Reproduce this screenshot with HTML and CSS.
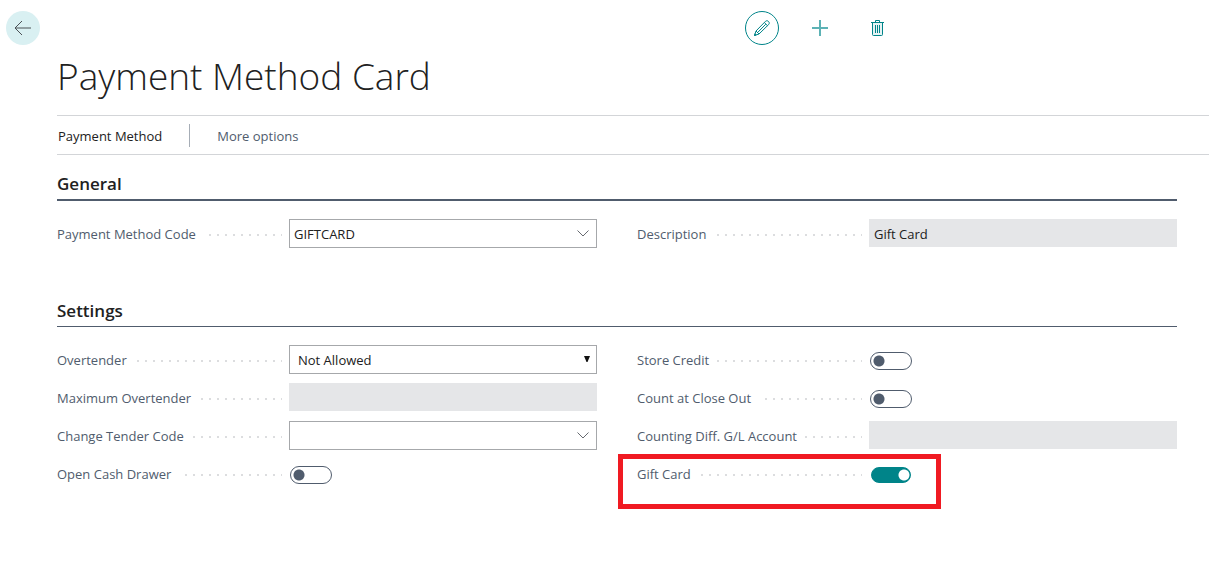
FILE: index.html
```html
<!DOCTYPE html>
<html lang="en">
<head>
<meta charset="utf-8">
<meta name="viewport" content="width=device-width, initial-scale=1">
<title>Payment Method Card</title>
<link rel="stylesheet" href="styles.css">
</head>
<body>
<header class="topbar">
  <button class="icon-btn back" type="button" aria-label="Back">
    <svg width="18" height="16" viewBox="0 0 18 16" fill="none" stroke="#4a5055"><path d="M1 8H17M8 1L1 8L8 15"/></svg>
  </button>
  <div class="tools">
    <button class="icon-btn edit" type="button" aria-label="Edit">
      <svg width="18" height="18" viewBox="0 0 18 18" fill="none" stroke="#008489"><path d="M1.5 16.5L3 12L12.5 2.3C14.5 0.5 17.5 3.5 15.7 5.5L6 15ZM3 12L6 15M11.3 3.5L14.5 6.7M4.8 13.3L12.8 5.2M1.5 16.5L2 14.8L3.2 16Z"/></svg>
    </button>
    <button class="icon-btn" type="button" aria-label="New">
      <svg width="18" height="18" viewBox="0 0 18 18" fill="none" stroke="#5cb2b5" stroke-width="2"><path d="M9 1V17M1 9H17"/></svg>
    </button>
    <button class="icon-btn" type="button" aria-label="Delete">
      <svg width="15" height="18" viewBox="0 0 15 18" fill="none" stroke="#008489"><path fill="#e5f3f4" d="M2.5 3.5V15.5Q2.5 16.5 3.5 16.5H11.5Q12.5 16.5 12.5 15.5V3.5"/><path d="M1 3.5H14M5.5 3V1.5H9.5V3M5.5 6V14M7.5 6V14M9.5 6V14"/></svg>
    </button>
  </div>
</header>
<main class="page">
  <h1 class="title">Payment Method Card</h1>
  <nav class="actions" aria-label="Actions">
    <button class="action action-main" type="button">Payment Method</button>
    <button class="action" type="button">More options</button>
  </nav>
  <form class="card">
    <section class="group">
      <h2 class="group-title group-title-strong">General</h2>
      <div class="columns">
        <div class="column">
          <div class="field">
            <div class="leader"><label class="label" for="code">Payment Method Code</label></div>
            <div class="combo">
              <input class="combo-input" id="code" type="text" value="GIFTCARD">
              <button class="combo-btn" type="button" aria-label="Choose payment method code"><svg width="12" height="7" viewBox="0 0 12 7" fill="none" stroke="#666a70"><path d="M0.5 0.5L6 6L11.5 0.5"/></svg></button>
            </div>
          </div>
        </div>
        <div class="column">
          <div class="field">
            <div class="leader"><label class="label" for="description">Description</label></div>
            <input class="readonly" id="description" type="text" value="Gift Card" readonly>
          </div>
        </div>
      </div>
    </section>
    <section class="group">
      <h2 class="group-title">Settings</h2>
      <div class="columns">
        <div class="column">
          <div class="field">
            <div class="leader"><label class="label" for="overtender">Overtender</label></div>
            <div class="select-wrap">
              <select class="select" id="overtender"><option>Not Allowed</option></select>
              <svg class="select-arrow" width="6" height="6" viewBox="0 0 6 6" fill="#111"><path d="M0 0H6L3.5 6H2.5Z"/></svg>
            </div>
          </div>
          <div class="field">
            <div class="leader"><label class="label" for="maximum">Maximum Overtender</label></div>
            <input class="readonly" id="maximum" type="text" readonly>
          </div>
          <div class="field">
            <div class="leader"><label class="label" for="tender">Change Tender Code</label></div>
            <div class="combo">
              <input class="combo-input" id="tender" type="text">
              <button class="combo-btn" type="button" aria-label="Choose change tender code"><svg width="12" height="7" viewBox="0 0 12 7" fill="none" stroke="#666a70"><path d="M0.5 0.5L6 6L11.5 0.5"/></svg></button>
            </div>
          </div>
          <div class="field">
            <div class="leader"><label class="label" for="drawer">Open Cash Drawer</label></div>
            <input class="toggle" id="drawer" type="checkbox">
          </div>
        </div>
        <div class="column">
          <div class="field">
            <div class="leader"><label class="label" for="store">Store Credit</label></div>
            <input class="toggle" id="store" type="checkbox">
          </div>
          <div class="field">
            <div class="leader"><label class="label" for="count">Count at Close Out</label></div>
            <input class="toggle" id="count" type="checkbox">
          </div>
          <div class="field">
            <div class="leader"><label class="label" for="account">Counting Diff. G/L Account</label></div>
            <input class="readonly" id="account" type="text" readonly>
          </div>
          <div class="field field-marked">
            <div class="leader"><label class="label" for="gift">Gift Card</label></div>
            <input class="toggle" id="gift" type="checkbox" checked>
          </div>
        </div>
      </div>
    </section>
  </form>
</main>
</body>
</html>
```
FILE: styles.css
```css
*, *::after { box-sizing: border-box; }

body {
  margin: 0;
  background: #fff;
  color: #212121;
  font: 13px/21px "Open Sans", "Noto Sans", sans-serif;
}

button, input, select { font: inherit; color: inherit; }

button {
  padding: 0;
  border: 0;
  background: none;
  cursor: pointer;
}

.topbar {
  display: flex;
  justify-content: space-between;
  padding: 11px 26% 0 6px;
}

.icon-btn {
  display: flex;
  align-items: center;
  justify-content: center;
  width: 34px;
  height: 34px;
  border-radius: 50%;
}

.back { background: #d9f0f2; }
.edit { border: 1px solid #008489; }
.tools { display: flex; gap: 24px; }

.page { padding-left: 57px; }

.title {
  margin: 0;
  padding: 6px 0 14px;
  font-size: 37px;
  font-weight: 300;
  line-height: 50px;
}

.actions {
  display: flex;
  align-items: center;
  height: 40px;
  border-top: 1px solid #d3d5d8;
  border-bottom: 1px solid #d3d5d8;
}

.action { padding: 2px 27px 0; color: #505c6d; }

.action-main {
  padding-left: 1px;
  border-right: 1px solid #a6adb6;
  color: #212121;
}

.card { padding: 17px 32px 0 0; }
.group { margin-bottom: 51px; }

.group-title {
  margin: 0 0 18px;
  padding-bottom: 3px;
  border-bottom: 1px solid #505c6d;
  font-size: 17px;
  font-weight: 600;
  line-height: 24px;
}

.group-title-strong { border-bottom-width: 2px; }

.columns {
  display: grid;
  grid-template-columns: 1fr 1fr;
  gap: 40px;
}

.column {
  display: flex;
  flex-direction: column;
  gap: 9px;
}

.field {
  position: relative;
  display: grid;
  grid-template-columns: 225px 1fr;
  gap: 7px;
  align-items: center;
  height: 29px;
}

.leader {
  padding-top: 2px;
  background: linear-gradient(90deg, #dcdddf 2px, transparent 2px) 0 12px / 8px 2px repeat-x;
}

.label {
  display: inline-block;
  padding-right: 8px;
  background: #fff;
  color: #505c6d;
}

.combo, .select-wrap {
  position: relative;
  display: flex;
  height: 29px;
  border: 1px solid #a6a8ab;
}

.combo-input {
  flex: 1;
  min-width: 0;
  padding: 2px 4px 0;
  border: 0;
  background: none;
}

.combo-btn {
  display: flex;
  align-items: center;
  justify-content: center;
  width: 26px;
}

.readonly {
  align-self: start;
  width: 100%;
  height: 28px;
  padding: 2px 5px 0;
  border: 0;
  background: #e5e6e8;
}

.select {
  flex: 1;
  padding: 2px 8px 0;
  border: 0;
  background: none;
  appearance: none;
}

.select-arrow {
  position: absolute;
  top: 10px;
  right: 6px;
  pointer-events: none;
}

.toggle {
  width: 42px;
  height: 18px;
  margin: 2px 1px 0;
  border: 1px solid #505c6d;
  border-radius: 9px;
  background: radial-gradient(circle at 8px 8px, #505c6d 5px, transparent 6px);
  appearance: none;
}

.toggle:checked {
  width: 40px;
  height: 16px;
  margin-left: 2px;
  border-color: #008489;
  background: radial-gradient(circle at 32px 7px, #fff 5px, #008489 6px);
}

.field-marked::after {
  content: "";
  position: absolute;
  top: -5px;
  left: -19px;
  width: 323px;
  height: 55px;
  border: 5px solid #f01a22;
  pointer-events: none;
}
```
